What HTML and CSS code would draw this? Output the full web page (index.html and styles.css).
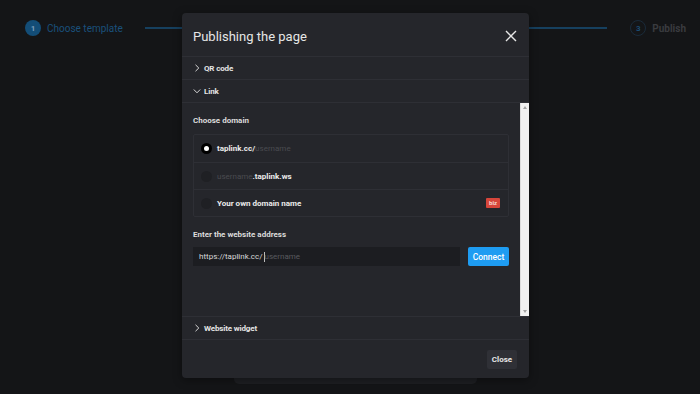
FILE: index.html
```html
<!DOCTYPE html>
<html>
<head>
<meta charset="utf-8">
<link rel="stylesheet" href="styles.css">
</head>
<body>
<div class="page">
  <div class="stepper">
    <div class="step active"><span class="num">1</span><span class="label">Choose template</span></div>
    <div class="line"></div>
    <div class="step future"><span class="num">3</span><span class="label">Publish</span></div>
  </div>
  <div class="main">
    <div class="card"></div>
  </div>
</div>

<div class="modal">
  <div class="m-head">
    <div class="m-title">Publishing the page</div>
    <svg class="x" width="12" height="12" viewBox="0 0 12 12"><path d="M1 1L11 11M11 1L1 11" stroke="#e6e6e6" stroke-width="1.4" fill="none"/></svg>
  </div>
  <div class="acc">
    <svg class="chev" width="6" height="8" viewBox="0 0 6 8"><path d="M1.5 0.8L4.8 4L1.5 7.2" stroke="#d8d8d8" stroke-width="1" fill="none"/></svg>
    <span>QR code</span>
  </div>
  <div class="acc">
    <svg class="chev" width="8" height="6" viewBox="0 0 8 6"><path d="M0.8 1.5L4 4.8L7.2 1.5" stroke="#d8d8d8" stroke-width="1" fill="none"/></svg>
    <span>Link</span>
  </div>
  <div class="scroll">
    <div class="content">
      <div class="lbl">Choose domain</div>
      <div class="domains">
        <div class="drow"><span class="radio on"></span><span class="dt">taplink.cc/<i class="ph">username</i></span></div>
        <div class="drow"><span class="radio"></span><span class="dt"><i class="ph">username</i>.taplink.ws</span></div>
        <div class="drow"><span class="radio"></span><span class="dt">Your own domain name</span><span class="biz">biz</span></div>
      </div>
      <div class="lbl lbl2">Enter the website address</div>
      <div class="addr">
        <div class="input">https://taplink.cc/<span class="caret"></span><span class="ph2">username</span></div>
        <div class="btn">Connect</div>
      </div>
    </div>
    <div class="sbar">
      <span class="arr up"></span>
      <span class="arr down"></span>
    </div>
  </div>
  <div class="acc top">
    <svg class="chev" width="6" height="8" viewBox="0 0 6 8"><path d="M1.5 0.8L4.8 4L1.5 7.2" stroke="#d8d8d8" stroke-width="1" fill="none"/></svg>
    <span>Website widget</span>
  </div>
  <div class="m-foot">
    <div class="close">Close</div>
  </div>
</div>
</body>
</html>
```

FILE: styles.css
```css
* { box-sizing: border-box; }
html, body { margin: 0; height: 100%; }
body {
  background: #141517;
  font-family: Roboto, "Liberation Sans", sans-serif;
  overflow: hidden;
}
.page { display: flex; flex-direction: column; height: 394px; }
.stepper {
  display: flex;
  align-items: center;
  height: 56px;
  padding: 0 14px 0 25px;
}
.step { display: flex; align-items: center; gap: 6px; }
.num {
  width: 16px; height: 16px; border-radius: 50%;
  display: flex; align-items: center; justify-content: center;
  font-size: 8px; font-weight: 700;
}
.label { font-size: 10px; }
.active .num { background: #134d77; color: #7a9cb7; }
.active .label { color: #1a507b; }
.future .num { border: 1px solid #1a2b3a; color: #1a4c74; }
.future .label { color: #3a3b3f; font-weight: 700; }
.line { flex: 1; height: 2px; background: #16405f; margin: 0 23px 0 22px; }
.main { flex: 1; display: flex; justify-content: center; align-items: flex-end; padding-left: 11px; }
.card { width: 243px; height: 300px; background: #1e1f23; border-radius: 0 0 5px 5px; margin-bottom: 10px; }

.modal {
  position: absolute;
  left: 182px; top: 13px;
  width: 347px; height: 365px;
  background: #25262b;
  border-radius: 4px;
  display: flex; flex-direction: column;
  color: #e0e0e0;
  box-shadow: 0 2px 10px rgba(0,0,0,0.4);
}
.m-head {
  height: 44px; flex: none;
  display: flex; align-items: center; justify-content: space-between;
  padding: 3px 12px 0 11px;
  border-bottom: 1px solid #2e2f35;
}
.m-title { font-size: 13px; color: #e6e6e6; }
.acc {
  height: 23px; flex: none;
  display: flex; align-items: center; gap: 3px;
  padding-left: 11px;
  border-bottom: 1px solid #2e2f35;
  font-size: 8px; font-weight: 700; color: #e4e4e4; letter-spacing: -0.15px;
}
.acc .chev { width: 8px; display: block; }
.acc.top { border-top: 1px solid #2e2f35; height: 24px; }
.scroll { flex: none; height: 213px; display: flex; }
.content { flex: 1; padding: 13px 11px 0 11px; }
.lbl { font-size: 8px; font-weight: 700; color: #dcdcdc; height: 18px; }
.lbl2 { margin-top: 13px; height: 17px; }
.domains { border: 1px solid #2e2f35; border-radius: 2px; }
.drow {
  height: 27px; display: flex; align-items: center;
  padding: 0 8px 0 7px; gap: 5px;
  font-size: 8px; font-weight: 700; color: #ececec;
}
.drow + .drow { border-top: 1px solid #2e2f35; }
.radio { width: 11px; height: 11px; border-radius: 50%; background: #1f2024; flex: none; position: relative; }
.radio.on { background: #000; }
.radio.on::after {
  content: ""; position: absolute; left: 3px; top: 3px;
  width: 5px; height: 5px; border-radius: 50%; background: #fff;
}
.dt { flex: 1; }
.ph { font-style: normal; font-weight: 400; color: #4a4b50; }
.biz {
  background: #d7463b; color: #f4d6d2; font-size: 6px; font-weight: 700;
  padding: 1px 3px; border-radius: 1px; line-height: 8px; height: 10px; width: 14px;
  display: flex; align-items: center; justify-content: center;
}
.addr { display: flex; gap: 8px; }
.input {
  flex: 1; height: 19px; background: #1c1d21;
  display: flex; align-items: center; padding-left: 6px;
  font-size: 8px; color: #d8d8d8;
}
.caret { width: 1px; height: 10px; background: #bbb; margin: 0 0 0 1px; }
.ph2 { color: #595a5f; }
.btn {
  width: 41px; height: 19px; background: #1e9cf2; color: #fff;
  display: flex; align-items: center; justify-content: center;
  font-size: 8.5px; font-weight: 500; border-radius: 2px;
}
.sbar {
  width: 9px; background: #f1f1f1; border-left: 1px solid #ddd;
  display: flex; flex-direction: column; justify-content: space-between; align-items: center;
  padding: 3px 0;
}
.arr { width: 0; height: 0; border-left: 2px solid transparent; border-right: 2px solid transparent; }
.arr.up { border-bottom: 3px solid #a3a3a3; }
.arr.down { border-top: 3px solid #a3a3a3; }
.m-foot { flex: 1; display: flex; justify-content: flex-end; align-items: center; padding: 0 12px 0 0; }
.close {
  width: 30px; height: 19px; background: #2f3036; color: #e6e6e6;
  display: flex; align-items: center; justify-content: center;
  font-size: 8px; font-weight: 700; border-radius: 2px;
}
```
